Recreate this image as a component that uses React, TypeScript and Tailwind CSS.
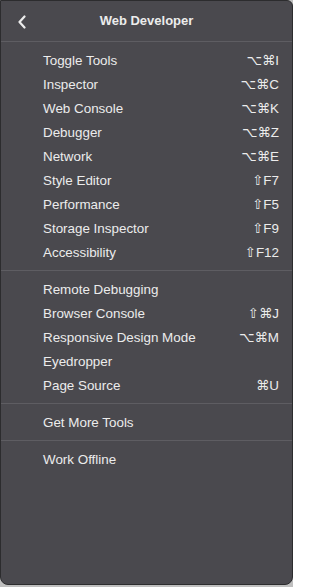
import React from "react";

type Item = { label: string; shortcut?: string };

const sections: Item[][] = [
  [
    { label: "Toggle Tools", shortcut: "⌥⌘I" },
    { label: "Inspector", shortcut: "⌥⌘C" },
    { label: "Web Console", shortcut: "⌥⌘K" },
    { label: "Debugger", shortcut: "⌥⌘Z" },
    { label: "Network", shortcut: "⌥⌘E" },
    { label: "Style Editor", shortcut: "⇧F7" },
    { label: "Performance", shortcut: "⇧F5" },
    { label: "Storage Inspector", shortcut: "⇧F9" },
    { label: "Accessibility", shortcut: "⇧F12" },
  ],
  [
    { label: "Remote Debugging" },
    { label: "Browser Console", shortcut: "⇧⌘J" },
    { label: "Responsive Design Mode", shortcut: "⌥⌘M" },
    { label: "Eyedropper" },
    { label: "Page Source", shortcut: "⌘U" },
  ],
  [{ label: "Get More Tools" }],
  [{ label: "Work Offline" }],
];

export default function App() {
  return (
    <div
      className="w-[293px] h-[587px] bg-[#bfbfbf] overflow-hidden"
      style={{ fontFamily: '"Liberation Sans", "DejaVu Sans", sans-serif' }}
    >
      <div className="h-[585px] bg-[#4a494e] border border-[#2c2c2e] rounded-b-[8px] rounded-tr-[6px] text-[#ececec] text-[13.4px]">
        <div className="relative h-[40px] flex items-center justify-center">
          <svg
            className="absolute left-[16px] top-[14px]"
            width="10"
            height="14"
            viewBox="0 0 10 14"
          >
            <path
              d="M7.5 1.5 L2.5 7 L7.5 12.5"
              fill="none"
              stroke="#ececec"
              strokeWidth="2.2"
              strokeLinecap="round"
              strokeLinejoin="round"
            />
          </svg>
          <span className="font-bold text-[13px]">Web Developer</span>
        </div>
        {sections.map((sec, i) => (
          <div key={i} className="border-t border-[#5e5d62] pt-[7px] pb-[5px]">
            {sec.map((it) => (
              <div
                key={it.label}
                className="h-[24px] flex items-center justify-between pl-[42px] pr-[13px]"
              >
                <span>{it.label}</span>
                {it.shortcut && <span>{it.shortcut}</span>}
              </div>
            ))}
          </div>
        ))}
      </div>
    </div>
  );
}
